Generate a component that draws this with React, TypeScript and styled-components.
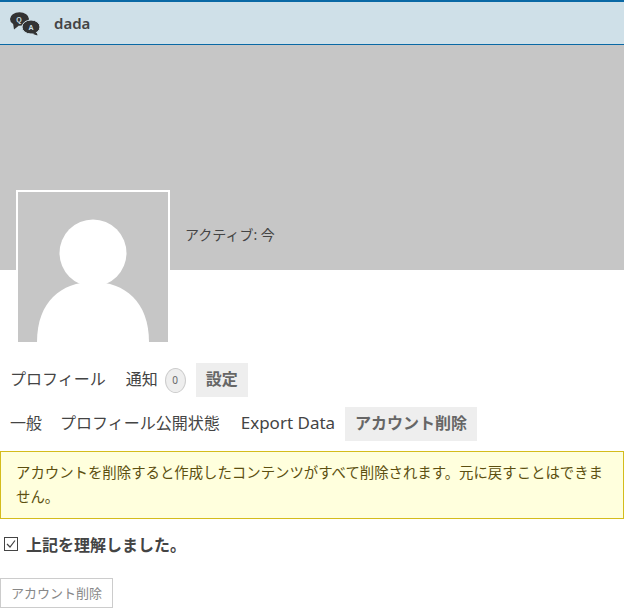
import * as React from 'react';
import styled, { createGlobalStyle } from 'styled-components';

const GlobalStyle = createGlobalStyle`
	html, body {
		margin: 0;
		padding: 0;
		background: #fff;
	}
	body {
		font-family: "Noto Sans", "Noto Sans CJK JP", sans-serif;
		color: #444;
		overflow: hidden;
	}
`;

const Page = styled.div`
	width: 624px;
	height: 608px;
	overflow: hidden;
`;

const TopBar = styled.header`
	box-sizing: border-box;
	height: 45px;
	display: flex;
	align-items: center;
	gap: 12px;
	padding: 2px 0 0 10px;
	background: #cfe0e8;
	border-top: 2px solid #0a69a5;
	border-bottom: 1px solid #0a69a5;
`;

const SiteName = styled.span`
	font-size: 15px;
	font-weight: 600;
	color: #444;
	margin-bottom: 3px;
`;

const Cover = styled.div`
	height: 225px;
	display: flex;
	gap: 15px;
	padding-left: 16px;
	background: #c6c6c6;
`;

const Avatar = styled.div`
	box-sizing: border-box;
	flex: none;
	width: 154px;
	height: 152px;
	margin-top: 145px;
	border: 2px solid #fff;
	border-bottom: 0;
	background: #c6c6c6;
	svg {
		display: block;
	}
`;

const Active = styled.div`
	margin-top: 179px;
	font-size: 14px;
	line-height: 22px;
	color: #444;
`;

const Menu = styled.nav<{ $top: number }>`
	display: flex;
	align-items: center;
	height: 34px;
	margin-top: ${p => p.$top}px;
	padding-left: 10px;
`;

const MenuItem = styled.a<{ $gap?: number; $size?: number }>`
	font-size: ${p => p.$size ?? 16}px;
	line-height: 32px;
	padding-bottom: 2px;
	color: #444;
	margin-right: ${p => p.$gap ?? 0}px;
`;

const ActiveItem = styled.a`
	padding: 0 10px 2px;
	font-size: 16px;
	font-weight: 700;
	line-height: 32px;
	color: #666;
	background: #eee;
`;

const Badge = styled.span`
	box-sizing: border-box;
	width: 21px;
	height: 25px;
	margin: 0 10px 0 7px;
	display: flex;
	align-items: center;
	justify-content: center;
	border: 1px solid #ccc;
	border-radius: 50%;
	background: #eee;
	font-size: 10px;
	color: #666;
`;

const Notice = styled.div`
	box-sizing: border-box;
	height: 68px;
	margin-top: 10px;
	padding: 9px 15px;
	border: 1px solid #d4bc1c;
	background: #ffd;
	font-size: 14.4px;
	line-height: 24px;
	color: #5c4f10;
`;

const Confirm = styled.label`
	display: flex;
	align-items: center;
	gap: 8px;
	height: 22px;
	margin-top: 14px;
	padding-left: 4px;
	font-size: 16px;
	font-weight: 700;
	color: #444;
`;

const CheckIcon = styled.svg`
	flex: none;
	width: 14px;
	height: 14px;
`;

const DeleteButton = styled.button`
	box-sizing: border-box;
	display: block;
	width: 113px;
	height: 30px;
	margin-top: 23px;
	padding: 0 0 2px;
	border: 1px solid #ccc;
	background: #fff;
	font-family: inherit;
	font-size: 13px;
	color: #888;
`;

const QaLogo = () => (
	<svg width="32" height="24" viewBox="0 0 32 24" style={{ flex: 'none' }}>
		<ellipse cx="9.500" cy="7" rx="9.500" ry="6.800" fill="#333" />
		<path d="M3 11l1 6.500 5-4z" fill="#333" />
		<path d="M26 19l1.500 4.500-6-2z" fill="#333" />
		<ellipse cx="21" cy="15" rx="9" ry="7" fill="#333" stroke="#cfe0e8" strokeWidth="1" />
		<path d="M25 19l2.500 4-6-2z" fill="#333" />
		<text x="9" y="9.500" textAnchor="middle" fontSize="7" fontWeight="700" fill="#cfe0e8" fontFamily="Liberation Sans">Q</text>
		<text x="21" y="18" textAnchor="middle" fontSize="7" fontWeight="700" fill="#cfe0e8" fontFamily="Liberation Sans">A</text>
	</svg>
);

const PersonIcon = () => (
	<svg width="150" height="150" viewBox="0 0 150 150">
		<circle cx="75" cy="61" r="33.500" fill="#fff" />
		<path d="M19 150c0-40 24-60 56-60s56 20 56 60z" fill="#fff" />
	</svg>
);

export default function App() {
	return (
		<Page>
			<GlobalStyle />
			<TopBar>
				<QaLogo />
				<SiteName>dada</SiteName>
			</TopBar>
			<Cover>
				<Avatar>
					<PersonIcon />
				</Avatar>
				<Active>アクティブ: 今</Active>
			</Cover>
			<Menu $top={93}>
				<MenuItem $gap={20}>プロフィール</MenuItem>
				<MenuItem>通知</MenuItem>
				<Badge>0</Badge>
				<ActiveItem>設定</ActiveItem>
			</Menu>
			<Menu $top={10}>
				<MenuItem $gap={18}>一般</MenuItem>
				<MenuItem $gap={21}>プロフィール公開状態</MenuItem>
				<MenuItem $gap={10} $size={17}>Export Data</MenuItem>
				<ActiveItem>アカウント削除</ActiveItem>
			</Menu>
			<Notice>アカウントを削除すると作成したコンテンツがすべて削除されます。元に戻すことはできません。</Notice>
			<Confirm>
				<CheckIcon viewBox="0 0 14 14">
					<rect x="0.500" y="0.500" width="13" height="13" fill="#fff" stroke="#444" />
					<path d="M3 7l3 3 5-6.500" fill="none" stroke="#444" strokeWidth="1.200" />
				</CheckIcon>
				上記を理解しました。
			</Confirm>
			<DeleteButton>アカウント削除</DeleteButton>
		</Page>
	);
}
